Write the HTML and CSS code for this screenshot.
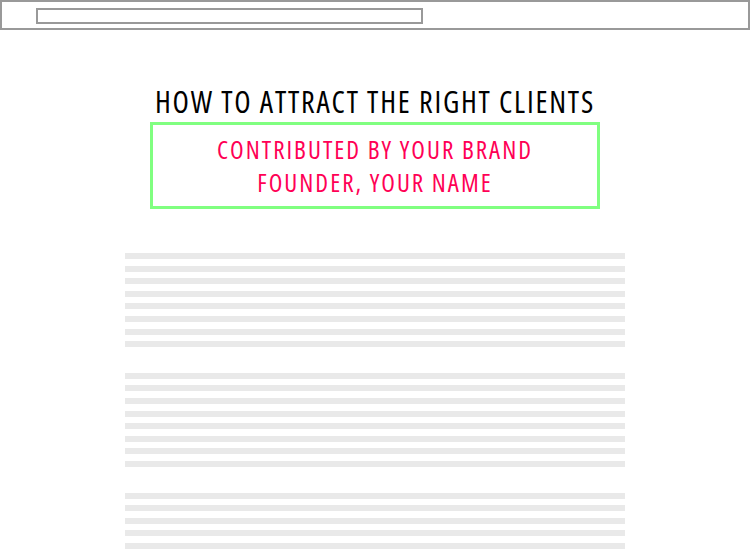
FILE: index.html
```html
<!DOCTYPE html>
<html>
<head>
<meta charset="utf-8">
<link rel="stylesheet" href="styles.css">
</head>
<body>
<div class="topbar"><div class="address"></div></div>
<main class="article">
  <h1 class="title">HOW TO ATTRACT THE RIGHT CLIENTS</h1>
  <div class="byline">CONTRIBUTED BY YOUR BRAND<br>FOUNDER, YOUR NAME</div>
  <div class="body">
    <div class="para"><i></i><i></i><i></i><i></i><i></i><i></i><i></i><i></i></div>
    <div class="para"><i></i><i></i><i></i><i></i><i></i><i></i><i></i><i></i></div>
    <div class="para"><i></i><i></i><i></i><i></i><i></i></div>
  </div>
</main>
</body>
</html>
```
FILE: styles.css
```css
html, body {
  margin: 0;
  padding: 0;
  background: #fff;
  overflow: hidden;
}
body {
  width: 750px;
  height: 550px;
  font-family: "Open Sans", "DejaVu Sans", sans-serif;
  font-stretch: 75%;
}
.topbar {
  box-sizing: border-box;
  height: 30px;
  border: 2px solid #999;
  padding: 6px 0 0 34px;
}
.address {
  box-sizing: border-box;
  width: 387px;
  height: 16px;
  border: 2px solid #999;
}
.article {
  display: flex;
  flex-direction: column;
  align-items: center;
  padding-top: 53px;
}
.title {
  margin: 0;
  font-weight: 400;
  font-size: 30px;
  line-height: 38px;
  color: #000;
  letter-spacing: 1.8px;
}
.byline {
  box-sizing: border-box;
  margin-top: 1px;
  width: 450px;
  height: 87px;
  border: 3px solid #80ff80;
  padding-top: 8px;
  text-align: center;
  color: #ff0055;
  font-weight: 400;
  font-size: 25px;
  line-height: 33px;
  letter-spacing: 2px;
}
.body {
  margin-top: 44px;
  width: 500px;
  display: flex;
  flex-direction: column;
  gap: 25.6px;
}
.para {
  display: flex;
  flex-direction: column;
  gap: 6.6px;
}
.para i {
  display: block;
  height: 6px;
  background: #e9e9e9;
}
```
